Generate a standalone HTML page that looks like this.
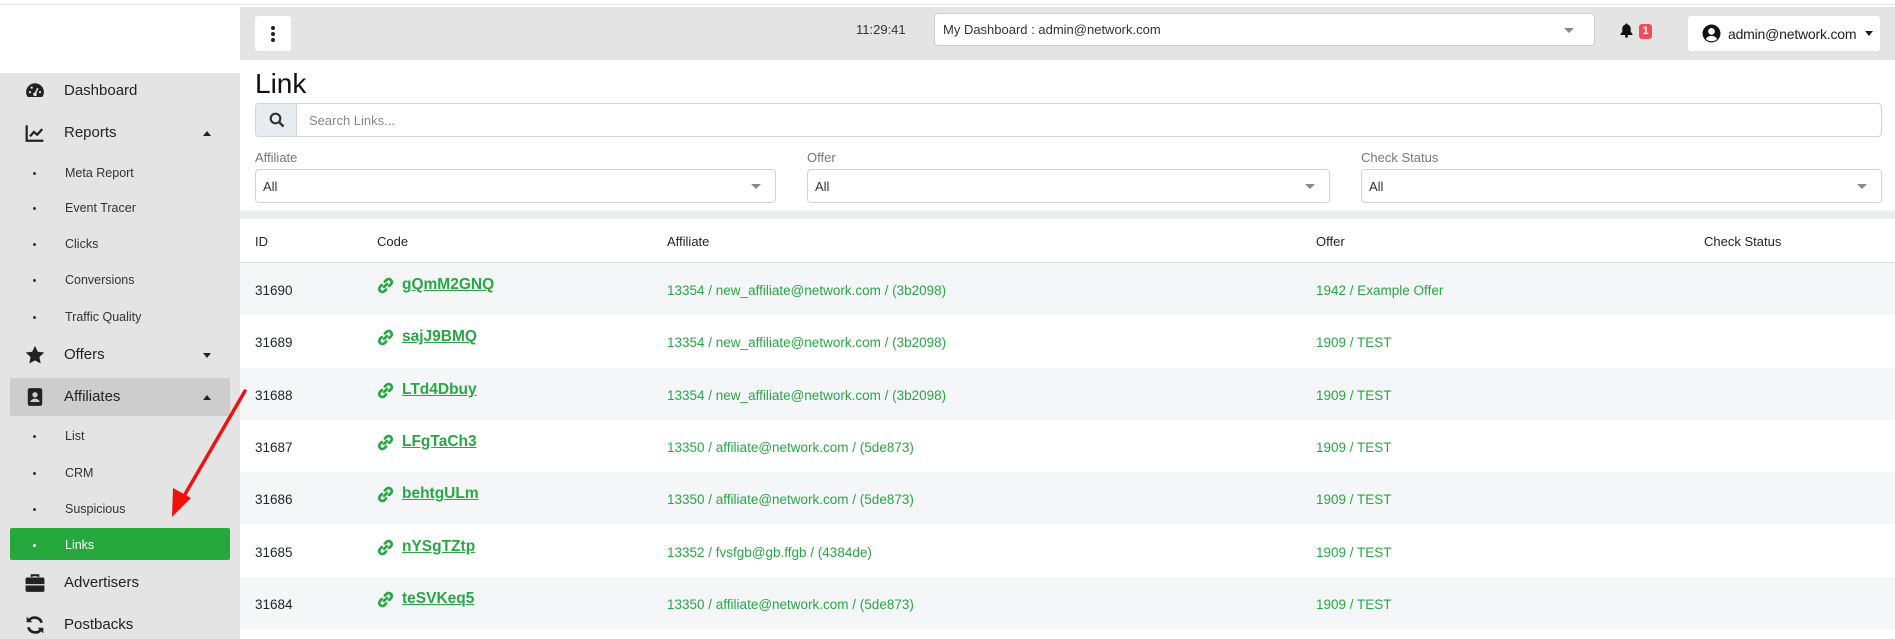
<!DOCTYPE html>
<html><head><meta charset="utf-8"><style>
*{box-sizing:border-box;margin:0;padding:0}
body{width:1895px;height:639px;overflow:hidden;background:#fff;font-family:"Liberation Sans",sans-serif;color:#212529;position:relative}
.abs{position:absolute}
#topline{left:0;top:4px;width:1895px;height:1px;background:#e2e2e2}
#side{left:0;top:73px;width:240px;height:566px;background:#e4e4e4}
#topbar{left:240px;top:7px;width:1655px;height:53px;background:#e4e4e4}
.mi{position:absolute;left:0;width:240px;font-size:15px;color:#222;line-height:20px}
.mi .ic{position:absolute;left:25px;top:0px;width:20px;height:20px}
.mi .t{position:absolute;left:64px;top:0}
.mi .car{position:absolute;left:203px;top:8px;width:0;height:0;border-left:4.5px solid transparent;border-right:4.5px solid transparent}
.up{border-bottom:5px solid #222}
.dn{border-top:5px solid #222}
.sub{position:absolute;left:0;width:240px;font-size:12.5px;color:#333;line-height:16px}
.sub .b{position:absolute;left:33px;top:7px;width:3px;height:3px;border-radius:50%;background:#333}
.sub .t{position:absolute;left:65px;top:0}
.btnw{background:#fff;border-radius:3px}
.sel{position:absolute;height:34px;border:1px solid #ced4da;border-radius:4px;background:#fff;font-size:13px;color:#333}
.sel span{position:absolute;left:7px;top:9px}
.sel i{position:absolute;right:14px;top:14px;border-left:5px solid transparent;border-right:5px solid transparent;border-top:5px solid #888}
.lbl{position:absolute;top:150px;font-size:13px;color:#777}
.row{position:absolute;left:240px;width:1655px;height:52.3px;font-size:13.5px}
.row.g{background:#f5f6f8}
.row div{position:absolute}
.grn{color:#28a745}
.code{font-size:15.5px;font-weight:bold;text-decoration:underline;color:#28a745}
</style></head><body>
<div class="abs" id="topline"></div>
<div class="abs" id="side"></div>
<div class="abs" id="topbar"></div>

<div class="abs btnw" style="left:255px;top:16px;width:36px;height:35px">
 <div class="abs" style="left:16px;top:10px;width:4px;height:4px;border-radius:50%;background:#222"></div>
 <div class="abs" style="left:16px;top:16px;width:4px;height:4px;border-radius:50%;background:#222"></div>
 <div class="abs" style="left:16px;top:22px;width:4px;height:4px;border-radius:50%;background:#222"></div>
</div>
<div class="abs" style="left:856px;top:22px;font-size:13px;color:#333">11:29:41</div>
<div class="abs" style="left:934px;top:13px;width:661px;height:33px;background:#fff;border:1px solid #ccc;border-radius:4px;font-size:13px;color:#333">
 <span class="abs" style="left:8px;top:8px">My Dashboard : admin@network.com</span>
 <i class="abs" style="right:20px;top:14px;border-left:5px solid transparent;border-right:5px solid transparent;border-top:5px solid #888"></i>
</div>
<svg class="abs" style="left:1620px;top:23px" width="13" height="15" viewBox="0 0 13 15"><path d="M6.5 0.5c.8 0 1.2.5 1.2 1.1 2 .5 3 2.1 3 4.2v3l1.8 2.2v1H.5v-1l1.8-2.2v-3c0-2.1 1-3.7 3-4.2 0-.6.4-1.1 1.2-1.1z" fill="#111"/><circle cx="6.5" cy="13.3" r="1.5" fill="#111"/></svg>
<div class="abs" style="left:1639px;top:24px;width:13px;height:15px;background:#e8505b;border-radius:3px;color:#fff;font-size:11px;font-weight:bold;text-align:center;line-height:15px">1</div>
<div class="abs btnw" style="left:1688px;top:16px;width:192px;height:35px">
 <svg class="abs" style="left:14px;top:8px" width="19" height="19" viewBox="0 0 18 18"><circle cx="9" cy="9" r="8.5" fill="#111"/><circle cx="9" cy="7" r="3.2" fill="#fff"/><path d="M3.6 14.2c1.3-2 3.1-2.8 5.4-2.8s4.1.8 5.4 2.8c-1.4 1.4-3.3 2.2-5.4 2.2s-4-.8-5.4-2.2z" fill="#fff"/></svg>
 <span class="abs" style="left:40px;top:10px;font-size:14px;color:#222;letter-spacing:-0.2px">admin@network.com</span>
 <i class="abs" style="left:177px;top:15px;border-left:4px solid transparent;border-right:4px solid transparent;border-top:5px solid #222"></i>
</div>

<div class="mi" style="top:81px"><svg class="ic" viewBox="0 0 18 18"><path d="M9 2a8 8 0 0 0-7.2 11.5c.3.6.8.9 1.4.9h11.6c.6 0 1.1-.3 1.4-.9A8 8 0 0 0 9 2z" fill="#222"/><circle cx="9" cy="12" r="1.6" fill="#e4e4e4"/><path d="M9 12l2.5-5.5" stroke="#e4e4e4" stroke-width="1.4"/><circle cx="4.5" cy="10" r="1" fill="#e4e4e4"/><circle cx="6" cy="6" r="1" fill="#e4e4e4"/><circle cx="13.5" cy="10" r="1" fill="#e4e4e4"/></svg><span class="t">Dashboard</span></div>
<div class="mi" style="top:123px"><svg class="ic" viewBox="0 0 18 18"><path d="M1.5 2v14h15" stroke="#222" stroke-width="2" fill="none"/><path d="M4.5 12l3.5-4 3 2.5 4.5-5" stroke="#222" stroke-width="2" fill="none"/></svg><span class="t">Reports</span><i class="car up"></i></div>
<div class="sub" style="top:165px"><i class="b"></i><span class="t">Meta Report</span></div>
<div class="sub" style="top:200px"><i class="b"></i><span class="t">Event Tracer</span></div>
<div class="sub" style="top:236px"><i class="b"></i><span class="t">Clicks</span></div>
<div class="sub" style="top:272px"><i class="b"></i><span class="t">Conversions</span></div>
<div class="sub" style="top:309px"><i class="b"></i><span class="t">Traffic Quality</span></div>
<div class="mi" style="top:345px"><svg class="ic" viewBox="0 0 18 18"><path d="M9 .8l2.5 5.3 5.8.7-4.3 4 1.1 5.8L9 13.8l-5.1 2.8L5 10.8.7 6.8l5.8-.7z" fill="#222"/></svg><span class="t">Offers</span><i class="car dn"></i></div>
<div class="abs" style="left:10px;top:378px;width:220px;height:38px;background:#cdcdcd;border-radius:2px"></div>
<div class="mi" style="top:387px"><svg class="ic" viewBox="0 0 18 18"><rect x="2.5" y="1" width="13" height="16" rx="2" fill="#222"/><circle cx="9" cy="7" r="2.4" fill="#cdcdcd"/><path d="M4.8 13.5c.5-2 2.1-3 4.2-3s3.7 1 4.2 3z" fill="#cdcdcd"/></svg><span class="t">Affiliates</span><i class="car up"></i></div>
<div class="sub" style="top:428px"><i class="b"></i><span class="t">List</span></div>
<div class="sub" style="top:465px"><i class="b"></i><span class="t">CRM</span></div>
<div class="sub" style="top:501px"><i class="b"></i><span class="t">Suspicious</span></div>
<div class="abs" style="left:10px;top:528px;width:220px;height:32px;background:#24a83b;border-radius:2px"></div>
<div class="sub" style="top:537px;color:#fff"><i class="b" style="background:#fff"></i><span class="t">Links</span></div>
<div class="mi" style="top:573px"><svg class="ic" viewBox="0 0 18 18"><path d="M6 3.5V2h6v1.5" stroke="#222" stroke-width="1.8" fill="none"/><rect x="0.5" y="4" width="17" height="13" rx="1.5" fill="#222"/><rect x="0.5" y="10" width="17" height="1.2" fill="#e4e4e4"/></svg><span class="t">Advertisers</span></div>
<div class="mi" style="top:615px"><svg class="ic" viewBox="0 0 18 18"><path d="M15 7A6.5 6.5 0 0 0 3.5 5M3 11a6.5 6.5 0 0 0 11.5 2" stroke="#222" stroke-width="2.4" fill="none"/><path d="M1.5 1.5v5h5z M16.5 16.5v-5h-5z" fill="#222"/></svg><span class="t">Postbacks</span></div>

<div class="abs" style="left:255px;top:68px;font-size:28px;color:#111">Link</div>
<div class="abs" style="left:255px;top:103px;width:1627px;height:34px;border:1px solid #ced4da;border-radius:4px;background:#fff">
 <div class="abs" style="left:0;top:0;width:41px;height:32px;background:#e9ecef;border-right:1px solid #ced4da;border-radius:3px 0 0 3px"></div>
 <svg class="abs" style="left:13px;top:8px" width="16" height="16" viewBox="0 0 16 16"><circle cx="6.5" cy="6.5" r="4.8" stroke="#333" stroke-width="2.2" fill="none"/><path d="M10 10l4.5 4.5" stroke="#333" stroke-width="2.6"/></svg>
 <span class="abs" style="left:53px;top:9px;font-size:13px;color:#888">Search Links...</span>
</div>
<div class="lbl" style="left:255px">Affiliate</div>
<div class="lbl" style="left:807px">Offer</div>
<div class="lbl" style="left:1361px">Check Status</div>
<div class="sel" style="left:255px;top:169px;width:521px"><span>All</span><i></i></div>
<div class="sel" style="left:807px;top:169px;width:523px"><span>All</span><i></i></div>
<div class="sel" style="left:1361px;top:169px;width:521px"><span>All</span><i></i></div>
<div class="abs" style="left:240px;top:211px;width:1655px;height:8px;background:#ebedf0"></div>
<div class="abs" style="left:240px;top:262px;width:1655px;height:1px;background:#dee2e6"></div>
<div class="row" style="top:219px;height:43px;font-size:13px">
 <div style="left:15px;top:15px">ID</div><div style="left:137px;top:15px">Code</div><div style="left:427px;top:15px">Affiliate</div><div style="left:1076px;top:15px">Offer</div><div style="left:1464px;top:15px">Check Status</div>
</div>

<svg width="0" height="0" style="position:absolute"><defs><symbol id="lk" viewBox="0 0 16 16"><path d="M6.8 9.2l2.4-2.4M7.5 4.6l1.3-1.3a2.6 2.6 0 0 1 3.7 3.7l-1.3 1.3M8.5 11.4l-1.3 1.3a2.6 2.6 0 0 1-3.7-3.7l1.3-1.3" stroke="#28a745" stroke-width="2.3" fill="none" stroke-linecap="round"/></symbol></defs></svg>

<div class="row g" style="top:263px"><div style="left:15px;top:20px">31690</div><svg style="position:absolute;left:136px;top:13px" width="19" height="19"><use href="#lk"/></svg><div class="code" style="left:162px;top:13px">gQmM2GNQ</div><div class="grn" style="left:427px;top:20px">13354 / new_affiliate@network.com / (3b2098)</div><div class="grn" style="left:1076px;top:20px">1942 / Example Offer</div></div>
<div class="row" style="top:315.3px"><div style="left:15px;top:20px">31689</div><svg style="position:absolute;left:136px;top:13px" width="19" height="19"><use href="#lk"/></svg><div class="code" style="left:162px;top:13px">sajJ9BMQ</div><div class="grn" style="left:427px;top:20px">13354 / new_affiliate@network.com / (3b2098)</div><div class="grn" style="left:1076px;top:20px">1909 / TEST</div></div>
<div class="row g" style="top:367.6px"><div style="left:15px;top:20px">31688</div><svg style="position:absolute;left:136px;top:13px" width="19" height="19"><use href="#lk"/></svg><div class="code" style="left:162px;top:13px">LTd4Dbuy</div><div class="grn" style="left:427px;top:20px">13354 / new_affiliate@network.com / (3b2098)</div><div class="grn" style="left:1076px;top:20px">1909 / TEST</div></div>
<div class="row" style="top:419.9px"><div style="left:15px;top:20px">31687</div><svg style="position:absolute;left:136px;top:13px" width="19" height="19"><use href="#lk"/></svg><div class="code" style="left:162px;top:13px">LFgTaCh3</div><div class="grn" style="left:427px;top:20px">13350 / affiliate@network.com / (5de873)</div><div class="grn" style="left:1076px;top:20px">1909 / TEST</div></div>
<div class="row g" style="top:472.2px"><div style="left:15px;top:20px">31686</div><svg style="position:absolute;left:136px;top:13px" width="19" height="19"><use href="#lk"/></svg><div class="code" style="left:162px;top:13px">behtgULm</div><div class="grn" style="left:427px;top:20px">13350 / affiliate@network.com / (5de873)</div><div class="grn" style="left:1076px;top:20px">1909 / TEST</div></div>
<div class="row" style="top:524.5px"><div style="left:15px;top:20px">31685</div><svg style="position:absolute;left:136px;top:13px" width="19" height="19"><use href="#lk"/></svg><div class="code" style="left:162px;top:13px">nYSgTZtp</div><div class="grn" style="left:427px;top:20px">13352 / fvsfgb@gb.ffgb / (4384de)</div><div class="grn" style="left:1076px;top:20px">1909 / TEST</div></div>
<div class="row g" style="top:576.8px"><div style="left:15px;top:20px">31684</div><svg style="position:absolute;left:136px;top:13px" width="19" height="19"><use href="#lk"/></svg><div class="code" style="left:162px;top:13px">teSVKeq5</div><div class="grn" style="left:427px;top:20px">13350 / affiliate@network.com / (5de873)</div><div class="grn" style="left:1076px;top:20px">1909 / TEST</div></div>

<svg class="abs" style="left:0;top:0" width="300" height="639"><path d="M245 391L184 496" stroke="#f01010" stroke-width="3.5" stroke-linecap="round"/><path d="M172 517L173 488L191 498z" fill="#f01010"/></svg>
</body></html>
